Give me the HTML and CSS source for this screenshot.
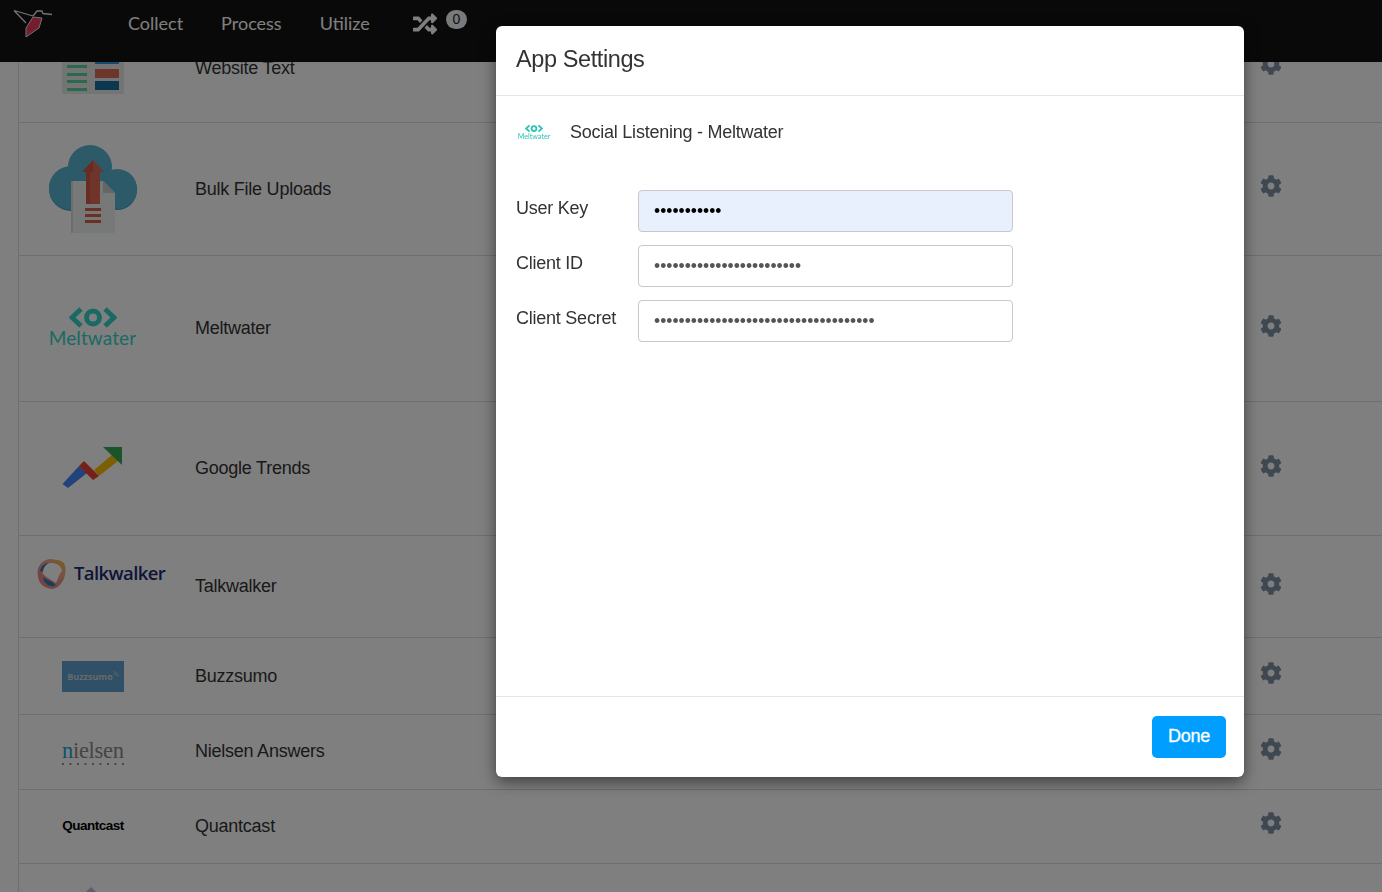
FILE: index.html
```html
<!DOCTYPE html>
<html lang="en">
<head>
<meta charset="utf-8">
<title>App Settings</title>
<link rel="stylesheet" href="styles.css">
</head>
<body>
<svg class="defs" width="0" height="0" aria-hidden="true">
  <defs>
    <linearGradient id="talk-grad" x1="1" y1="0" x2="0" y2="1">
      <stop offset="0" stop-color="#f8c23c"/>
      <stop offset=".45" stop-color="#e89a9a"/>
      <stop offset="1" stop-color="#e87a6a"/>
    </linearGradient>
  </defs>
  <symbol id="cog" viewBox="0 0 512 512"><path d="M487.4 315.7l-42.6-24.6c4.3-23.2 4.3-47 0-70.2l42.6-24.6c4.9-2.8 7.1-8.6 5.5-14-11.1-35.6-30-67.8-54.7-94.6-3.8-4.1-10-5.1-14.8-2.3L380.8 110c-17.9-15.4-38.5-27.3-60.8-35.1V25.8c0-5.6-3.9-10.5-9.4-11.7-36.7-8.2-74.3-7.8-109.2 0-5.5 1.2-9.4 6.1-9.4 11.7V75c-22.2 7.9-42.8 19.8-60.8 35.1L88.7 85.5c-4.9-2.8-11-1.9-14.8 2.3-24.7 26.7-43.6 58.9-54.7 94.6-1.7 5.4.6 11.2 5.5 14L67.3 221c-4.3 23.2-4.3 47 0 70.2l-42.6 24.6c-4.9 2.8-7.1 8.6-5.5 14 11.1 35.6 30 67.8 54.7 94.6 3.8 4.1 10 5.1 14.8 2.3l42.6-24.6c17.9 15.4 38.5 27.3 60.8 35.1v49.2c0 5.6 3.9 10.5 9.4 11.7 36.7 8.2 74.3 7.8 109.2 0 5.5-1.2 9.4-6.1 9.4-11.7v-49.2c22.2-7.9 42.8-19.8 60.8-35.1l42.6 24.6c4.9 2.8 11 1.9 14.8-2.3 24.7-26.7 43.6-58.9 54.7-94.6 1.5-5.5-.7-11.3-5.6-14.1zM256 336c-44.1 0-80-35.9-80-80s35.9-80 80-80 80 35.9 80 80-35.9 80-80 80z"/></symbol>
  <symbol id="eye" viewBox="0 0 48 21">
    <path d="M12 2 3 10.500 12 19" class="eye-line"/>
    <path d="M36 2 45 10.500 36 19" class="eye-line"/>
    <circle cx="24" cy="10.500" r="6.500" class="eye-line"/>
  </symbol>
</svg>

<header class="navbar">
  <svg class="brand" width="60" height="40" viewBox="0 0 60 40">
    <path d="M33 17 42 18 39 28 26 37 26 28Z" class="bird-body"/>
    <path d="M14 10.500 33 16M14 10.500 26 23M33 16 37 11 42 11 43 14M43 13.500 52 14.500" class="bird-line"/>
  </svg>
  <nav class="nav-links">
    <a class="nav-link">Collect</a>
    <a class="nav-link">Process</a>
    <a class="nav-link">Utilize</a>
  </nav>
  <svg class="shuffle" viewBox="0 0 512 512"><path d="M504.971 359.029c9.373 9.373 9.373 24.569 0 33.941l-80 79.984c-15.01 15.01-40.971 4.49-40.971-16.971V416h-58.785a12.004 12.004 0 0 1-8.773-3.812l-70.556-75.596 53.333-57.143L352 336h32v-39.981c0-21.438 25.943-31.998 40.971-16.971l80 79.981zM12 176h84l52.781 56.551 53.333-57.143-70.556-75.596A11.999 11.999 0 0 0 122.785 96H12c-6.627 0-12 5.373-12 12v56c0 6.627 5.373 12 12 12zm372 0v39.984c0 21.46 25.961 31.98 40.971 16.971l80-79.984c9.373-9.373 9.373-24.569 0-33.941l-80-79.981C409.943 24.021 384 34.582 384 56.019V96h-58.785a12.004 12.004 0 0 0-8.773 3.812L96 336H12c-6.627 0-12 5.373-12 12v56c0 6.627 5.373 12 12 12h110.785c3.326 0 6.503-1.381 8.773-3.812L352 176h32z"/></svg>
  <span class="badge">0</span>
</header>

<main class="app-list">
  <section class="row row-first">
    <div class="logo logo-web">
      <svg width="62" height="62" viewBox="0 0 62 62">
        <rect width="62" height="62" rx="1" class="panel"/>
        <rect x="5" y="33" width="20" height="3" fill="#55d0a0"/>
        <rect x="5" y="41" width="20" height="3" fill="#55d0a0"/>
        <rect x="5" y="48" width="20" height="3" fill="#55d0a0"/>
        <rect x="5" y="56" width="20" height="3" fill="#55d0a0"/>
        <rect x="33" y="23" width="24" height="9" fill="#2a97d6"/>
        <rect x="33" y="37" width="24" height="9" fill="#e06a55"/>
        <rect x="33" y="49" width="24" height="9" fill="#17709f"/>
      </svg>
    </div>
    <div class="name">Website Text</div>
    <svg class="cog"><use href="#cog"/></svg>
  </section>

  <section class="row row-bulk">
    <div class="logo">
      <svg width="88" height="88" viewBox="0 0 88 88">
        <circle cx="22" cy="44" r="22" fill="#3a9cc0"/>
        <circle cx="68" cy="45" r="20" fill="#3a9cc0"/>
        <circle cx="41" cy="22" r="22" fill="#58b4d0"/>
        <circle cx="22" cy="43" r="22" fill="#58b4d0"/>
        <circle cx="68" cy="44" r="20" fill="#58b4d0"/>
        <path d="M22 36h32l12 12v40H22z" fill="#eef0f1"/>
        <path d="M54 36l12 12H54z" fill="#c9cdd0"/>
        <path d="M22 36h2v52h-2z" fill="#d8dadc"/>
        <path d="M37 27h-4L44 15 55 27h-4v32H37z" fill="#e06a55"/>
        <path d="M37 27h-4L44 15v12h-3v32h-4z" fill="#c9543f" opacity=".7"/>
        <rect x="36" y="63" width="16" height="3" fill="#d85f49"/>
        <rect x="36" y="69" width="16" height="3" fill="#d85f49"/>
        <rect x="36" y="75" width="16" height="3" fill="#d85f49"/>
      </svg>
    </div>
    <div class="name">Bulk File Uploads</div>
    <svg class="cog"><use href="#cog"/></svg>
  </section>

  <section class="row row-melt">
    <div class="logo logo-melt">
      <svg class="melt-eye"><use href="#eye"/></svg>
      <span class="melt-text">Meltwater</span>
    </div>
    <div class="name name-up">Meltwater</div>
    <svg class="cog"><use href="#cog"/></svg>
  </section>

  <section class="row row-trends">
    <div class="logo logo-trends">
      <svg width="60" height="42" viewBox="0 0 60 42">
        <path d="M.5 38 17 20 25 27 6 42z" fill="#4285f4"/>
        <path d="M17 20 22 15 37 30 31 34z" fill="#ea4335"/>
        <path d="M32 24 50 9 56 15 37 30z" fill="#fbbc05"/>
        <path d="M41 1H60V19z" fill="#34a853"/>
      </svg>
    </div>
    <div class="name name-up">Google Trends</div>
    <svg class="cog"><use href="#cog"/></svg>
  </section>

  <section class="row row-talk">
    <div class="logo logo-talk">
      <svg width="30" height="32" viewBox="0 0 30 32">
        <path d="M13 1c6 1 9 0 14 4 3 6 1 11 0 16-3 5-5 9-12 10C8 30 2 27 1 18-1 9 5 2 13 1z" fill="url(#talk-grad)"/>
        <path d="M14 5c5 0 10 2 11 8-3 3-4 8-6 12-4-3-9-5-13-9-2-4 2-11 8-11z" fill="#fff"/>
        <path d="M6 19c3 3 9 4 13 8-4 3-12 0-13-8zM3 13c1-5 5-8 9-8-3 1-6 5-6 9z" fill="#2c7bb5"/>
      </svg>
      <span class="talk-text">Talkwalker</span>
    </div>
    <div class="name name-up">Talkwalker</div>
    <svg class="cog"><use href="#cog"/></svg>
  </section>

  <section class="row row-buzz">
    <div class="logo"><div class="buzz">Buzzsumo<svg class="buzz-wave" viewBox="0 0 8 8"><path d="M1 1a6 6 0 0 1 6 6M1 3.500a3.500 3.500 0 0 1 3.500 3.500" /></svg></div></div>
    <div class="name">Buzzsumo</div>
    <svg class="cog"><use href="#cog"/></svg>
  </section>

  <section class="row row-nielsen">
    <div class="logo"><div class="nielsen"><span class="nielsen-word"><span class="nielsen-n">n</span>ielsen</span><span class="nielsen-dots"></span></div></div>
    <div class="name name-up">Nielsen Answers</div>
    <svg class="cog"><use href="#cog"/></svg>
  </section>

  <section class="row row-quant">
    <div class="logo logo-quant"><span class="quant">Quantcast</span></div>
    <div class="name name-up">Quantcast</div>
    <svg class="cog"><use href="#cog"/></svg>
  </section>

  <section class="row row-last">
    <div class="logo"><svg width="62" height="62" viewBox="0 0 62 62"><path d="M29 0 46 17H12z" fill="#bdb8d8"/></svg></div>
    <div class="name"></div>
  </section>
</main>

<div class="backdrop"></div>

<div class="modal" role="dialog">
  <div class="modal-header"><h1 class="modal-title">App Settings</h1></div>
  <div class="modal-body">
    <div class="app-line">
      <div class="mini-melt">
        <svg class="mini-eye"><use href="#eye"/></svg>
        <span class="mini-text">Meltwater</span>
      </div>
      <span class="app-name">Social Listening - Meltwater</span>
    </div>
    <form class="form">
      <label class="field-label" for="k">User Key</label>
      <input class="field field-auto" id="k" type="password" value="abcdefghijk">
      <label class="field-label" for="c">Client ID</label>
      <input class="field" id="c" type="password" value="abcdefghijklmnopqrstuvwx">
      <label class="field-label" for="s">Client Secret</label>
      <input class="field" id="s" type="password" value="abcdefghijklmnopqrstuvwxyz0123456789">
    </form>
  </div>
  <div class="modal-footer"><button class="btn-done" type="button">Done</button></div>
</div>
</body>
</html>
```

FILE: styles.css
```css
* { box-sizing: border-box; }
html, body { margin: 0; height: 100%; }
body {
  overflow: hidden;
  background: #fff;
  color: #333;
  font-family: "Liberation Sans", Arial, sans-serif;
  font-size: 18px;
  letter-spacing: -.24px;
}
.defs { position: absolute; }

/* navbar */
.navbar {
  position: fixed;
  top: 0; left: 0; right: 0;
  height: 62px;
  background: #121212;
  display: flex;
  align-items: flex-start;
  letter-spacing: 0;
  z-index: 2;
}
.brand { flex: none; }
.bird-body { fill: #e63a5c; stroke: #e8e8e8; stroke-width: 1; }
.bird-line { fill: none; stroke: #e8e8e8; stroke-width: 1.300; }
.nav-links {
  display: flex;
  gap: 38px;
  margin-left: 68px;
  padding-top: 12px;
  font-family: Lato, sans-serif;
  font-size: 18px;
  line-height: 22px;
}
.nav-link { color: #fff; }
.shuffle { width: 24px; height: 24px; margin: 12px 0 0 43px; fill: #fff; }
.badge {
  width: 21px; height: 19px;
  margin: 10px 0 0 9px;
  border-radius: 10px;
  background: #f0f4f6;
  color: #1b2530;
  font-size: 14px;
  line-height: 18px;
  text-align: center;
}

/* list */
.app-list {
  margin-left: 18px;
  border-left: 1px solid #ddd;
}
.row {
  display: grid;
  grid-template-columns: 148px 1fr 22px;
  column-gap: 28px;
  align-items: center;
  padding-right: 100px;
  border-bottom: 1px solid #ddd;
}
.row-first { height: 123px; padding-top: 13px; }
.row-bulk { height: 133px; }
.row-melt { height: 146px; }
.row-trends { height: 134px; }
.row-talk { height: 102px; }
.row-buzz { height: 77px; }
.row-nielsen { height: 75px; }
.row-quant { height: 74px; }
.row-last { height: 108px; border-bottom: 0; }

.logo { display: flex; justify-content: center; align-items: center; min-width: 0; }
.logo svg { display: block; }
.logo-web { margin-bottom: 10px; }
.logo-trends { margin: 0 2px 3px 0; }
.logo-quant { margin-bottom: 2px; }
.name { color: #333; line-height: 22px; }
.name-up { padding-bottom: 2px; }
.cog { width: 22px; height: 22px; fill: #7f8fa3; margin-bottom: 6px; }
.row-first .cog { margin-bottom: 8px; }
.row-quant .cog { margin-bottom: 8px; }
.panel { fill: #e6e8e8; }

.eye-line { fill: none; stroke: currentColor; stroke-width: 5; }
.logo-melt { flex-direction: column; color: #34d4c6; margin: 0 1px 5px 0; gap: 1px; }
.melt-eye { width: 48px; height: 21px; }
.melt-text { font-family: Lato, sans-serif; font-size: 19px; line-height: 17px; color: #34d4c6; letter-spacing: .1px; }

.logo-talk { justify-content: flex-start; margin: 0 0 26px 18px; width: 140px; gap: 7px; }
.talk-text { font-family: "Open Sans", sans-serif; font-weight: 600; font-size: 18.500px; letter-spacing: -.6px; line-height: 22px; margin-bottom: 2px; color: #1c2a72; }

.buzz {
  width: 62px; height: 31px;
  background: #5ea0cc;
  display: flex; align-items: center; justify-content: center;
  color: #c8d4dc;
  font-family: "Open Sans", sans-serif;
  font-weight: 700;
  font-size: 9px;
  letter-spacing: 0;
}
.buzz-wave { width: 6px; height: 6px; margin: -4px 0 0 0; fill: none; stroke: #c8d4dc; stroke-width: 1; }

.nielsen { width: 62px; display: flex; flex-direction: column; align-items: stretch; margin-top: 2px; }
.nielsen-word {
  font-family: "Liberation Serif", serif;
  font-size: 22.500px;
  line-height: 19px;
  letter-spacing: -.3px;
  color: #8a8a8a;
}
.nielsen-n { color: #1ca3d8; }
.nielsen-dots {
  height: 2px;
  margin-top: 3px;
  background: radial-gradient(circle at 1px 1px, #8a8a8a 1px, transparent 1px) 0 0 / 7.500px 2px repeat-x;
}
.quant { font-weight: 700; font-size: 13.500px; letter-spacing: -.5px; color: #000; }

/* backdrop + modal */
.backdrop {
  position: fixed;
  inset: 0;
  background: rgba(0, 0, 0, .5);
  z-index: 3;
}
.modal {
  position: fixed;
  top: 26px; left: 496px;
  width: 748px; height: 751px;
  background: #fff;
  border-radius: 6px;
  box-shadow: 0 5px 15px rgba(0, 0, 0, .5);
  display: flex;
  flex-direction: column;
  z-index: 4;
}
.modal-header {
  height: 70px;
  flex: none;
  padding: 0 20px;
  display: flex;
  align-items: center;
  border-bottom: 1px solid #e5e5e5;
}
.modal-title { margin: 0; font-size: 23.500px; font-weight: 400; letter-spacing: -.4px; color: #333; padding-bottom: 3px; }
.modal-body { flex: 1; padding: 20px 231px 0 20px; }
.app-line { display: flex; align-items: center; height: 32px; margin-bottom: 42px; }
.mini-melt { width: 36px; display: flex; flex-direction: column; align-items: center; color: #2fc4b8; letter-spacing: 0; }
.mini-eye { width: 18px; height: 9px; }
.mini-text { font-family: Lato, sans-serif; font-size: 7.200px; line-height: 7px; color: #2fc4b8; }
.app-name { margin-left: 18px; color: #333; }
.form { display: grid; grid-template-columns: 122px 1fr; row-gap: 13px; align-items: start; }
.field-label { color: #333; line-height: 22px; padding-top: 7px; }
.field {
  height: 42px;
  width: 100%;
  padding: 1px 15px 0;
  border: 1px solid #c8c8c8;
  border-radius: 4px;
  background: #fff;
  color: #555;
  font-family: "Liberation Sans", Arial, sans-serif;
  font-size: 17.500px;
  letter-spacing: 0;
  outline: none;
}
.field-auto { background: #e8f0fe; color: #000; }
.modal-footer {
  height: 81px;
  flex: none;
  border-top: 1px solid #e5e5e5;
  display: flex;
  justify-content: flex-end;
  align-items: flex-start;
  padding: 19px 18px 0 0;
}
.btn-done {
  width: 74px; height: 42px;
  border: 0;
  border-radius: 5px;
  background: #009eff;
  color: #fff;
  font-family: "Liberation Sans", Arial, sans-serif;
  font-size: 18px;
  letter-spacing: -.24px;
  -webkit-text-stroke: .3px #fff;
  padding: 0 0 2px;
}
```
